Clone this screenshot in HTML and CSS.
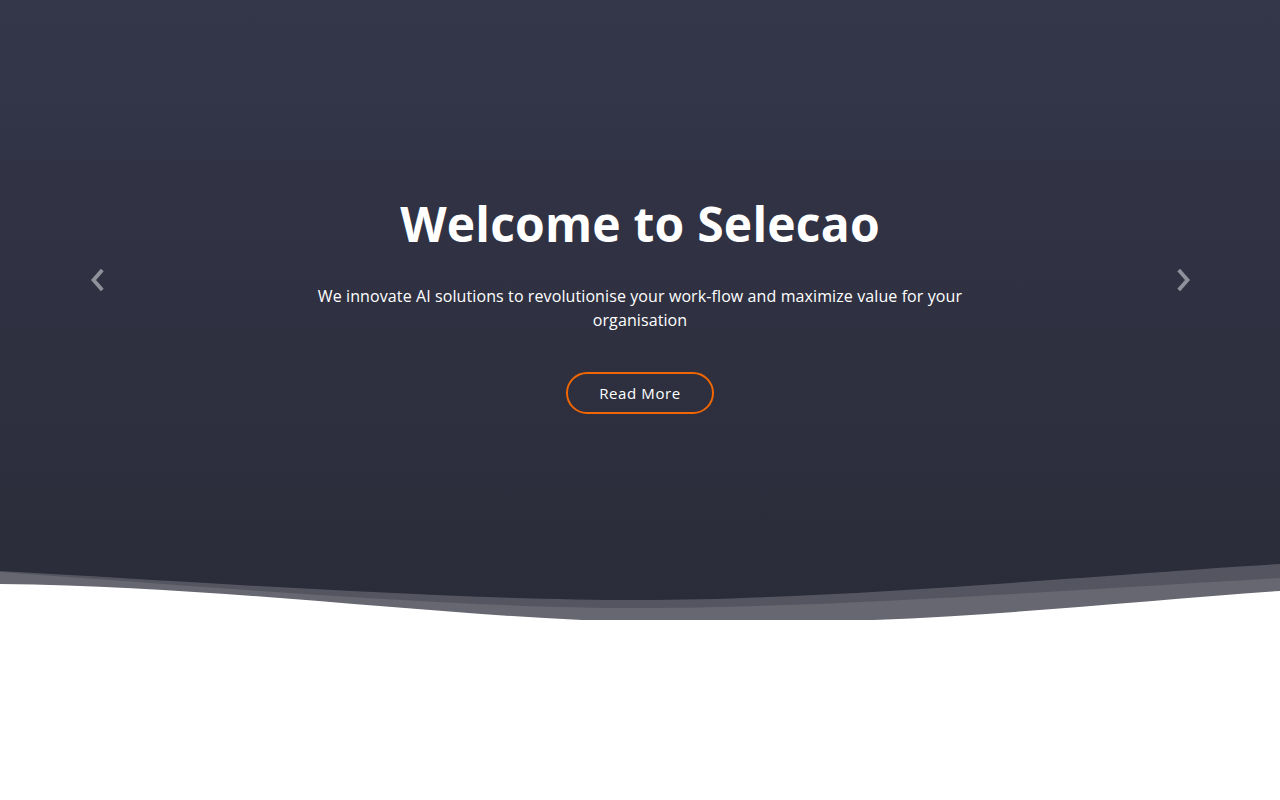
FILE: index.html
```html
<!DOCTYPE html>
<html lang="en">
<head>
<meta charset="utf-8">
<title>Selecao</title>
<link rel="stylesheet" href="styles.css">
</head>
<body>
<section class="hero">
  <div class="hero-inner">
    <a class="control" href="#" aria-label="Previous">
      <svg width="16" height="24" viewBox="0 0 16 24"><path d="M12 3.5 L4.5 12 L12 20.5" fill="none" stroke="currentColor" stroke-width="3.8" stroke-linecap="square"/></svg>
    </a>
    <div class="content">
      <h2 class="title">Welcome to Selecao</h2>
      <p class="lead">We innovate AI solutions to revolutionise your work-flow and maximize value for your organisation</p>
      <a class="btn" href="#">Read More</a>
    </div>
    <a class="control" href="#" aria-label="Next">
      <svg width="16" height="24" viewBox="0 0 16 24"><path d="M4 3.5 L11.5 12 L4 20.5" fill="none" stroke="currentColor" stroke-width="3.8" stroke-linecap="square"/></svg>
    </a>
  </div>
  <svg class="waves" viewBox="0 0 1280 60" preserveAspectRatio="none">
    <path d="M0 11 C 200 22, 450 40, 640 40 S 1100 15, 1280 4 L1280 60 L0 60 Z" fill="#545560"/>
    <path d="M0 12 C 200 26, 450 48, 640 48 S 1100 28, 1280 18 L1280 60 L0 60 Z" fill="#666770"/>
    <path d="M0 24 C 250 27, 450 60, 680 63 S 1100 44, 1280 31 L1280 60 L0 60 Z" fill="#ffffff"/>
  </svg>
</section>
<main class="after"></main>
</body>
</html>
```
FILE: styles.css
```css
* { box-sizing: border-box; }
html, body { margin: 0; padding: 0; background: #fff; }
body { font-family: "Open Sans", "Liberation Sans", sans-serif; }

.hero {
  position: relative;
  height: 620px;
  overflow: hidden;
  background: linear-gradient(0deg, #2a2c39 0%, #34364a 100%);
}
.hero-inner {
  display: flex;
  align-items: center;
  height: 560px;
}
.control {
  width: 193px;
  flex: 0 0 193px;
  display: flex;
  justify-content: center;
  align-items: center;
  color: #90919b;
  text-decoration: none;
}
.control svg { display: block; }
.content {
  flex: 1;
  display: flex;
  flex-direction: column;
  align-items: center;
  text-align: center;
  margin-top: 48px;
}
.title {
  margin: 0 0 31px;
  font-family: "Open Sans", sans-serif;
  font-weight: 700;
  font-size: 48px;
  line-height: 58px;
  letter-spacing: 0.2px;
  color: #fff;
}
.lead {
  margin: 0 0 40px;
  max-width: 660px;
  font-size: 16px;
  line-height: 24px;
  letter-spacing: 0.1px;
  color: #fff;
}
.btn {
  display: inline-block;
  padding: 10px 31px;
  border: 2px solid #ef6603;
  border-radius: 50px;
  font-family: "Open Sans", sans-serif;
  font-size: 15px;
  line-height: 18px;
  letter-spacing: 0.6px;
  color: #fff;
  text-decoration: none;
}
.waves {
  position: absolute;
  left: 0;
  bottom: 0;
  width: 100%;
  height: 60px;
  display: block;
}
.after { height: 180px; }
```
